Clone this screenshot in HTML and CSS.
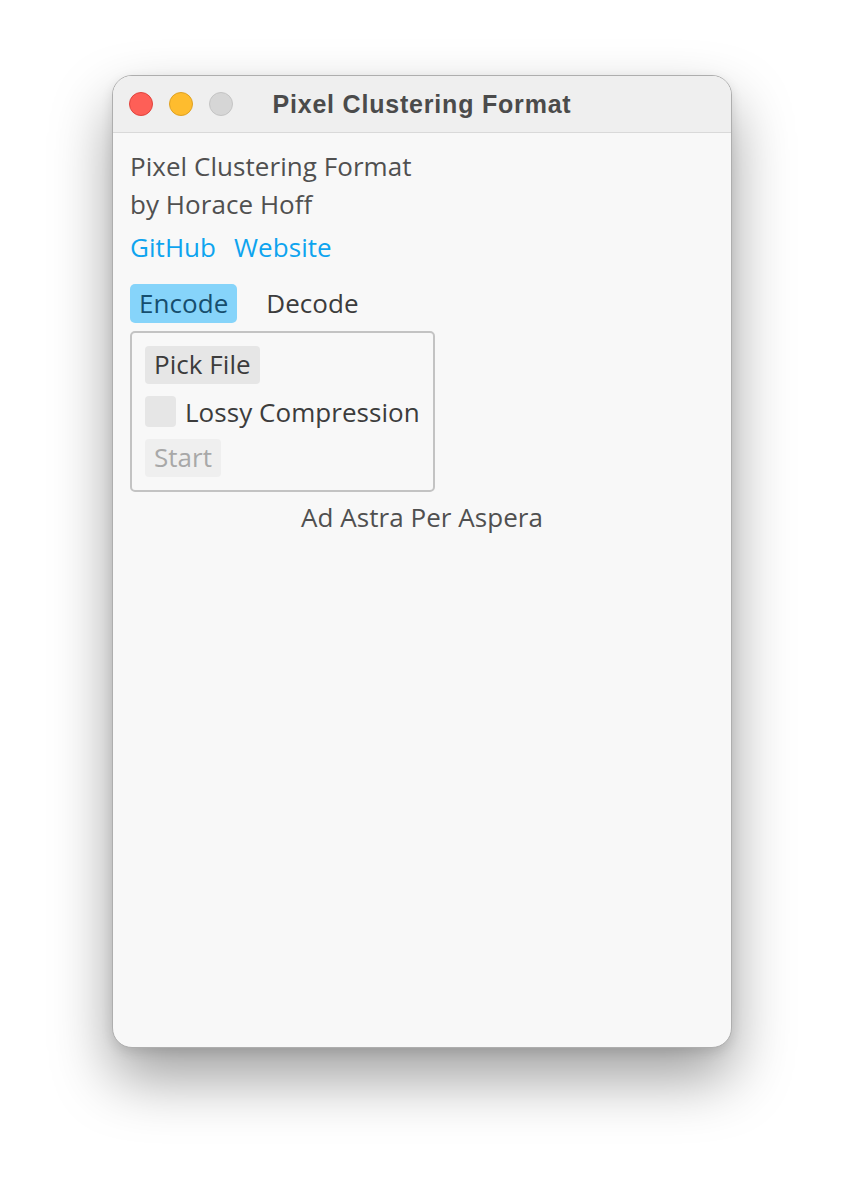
FILE: index.html
```html
<!DOCTYPE html>
<html>
<head>
<meta charset="utf-8">
<link rel="stylesheet" href="styles.css">
</head>
<body>
<div class="window">
  <div class="titlebar">
    <div class="lights">
      <span class="light red"></span>
      <span class="light yellow"></span>
      <span class="light gray"></span>
    </div>
    <div class="title">Pixel Clustering Format</div>
  </div>
  <div class="content">
    <div class="line">Pixel Clustering Format</div>
    <div class="line">by Horace Hoff</div>
    <div class="links"><span class="link">GitHub</span><span class="link">Website</span></div>
    <div class="tabs"><span class="tab active">Encode</span><span class="tab">Decode</span></div>
    <div class="group">
      <div class="btn">Pick File</div>
      <div class="check"><span class="box"></span><span>Lossy Compression</span></div>
      <div class="btn disabled">Start</div>
    </div>
    <div class="motto">Ad Astra Per Aspera</div>
  </div>
</div>
</body>
</html>
```
FILE: styles.css
```css
html, body { margin: 0; padding: 0; background: #ffffff; }
body { padding: 75px 0 0 112px; height: 1196px; box-sizing: border-box; overflow: hidden; }
.window {
  width: 620px; height: 973px; box-sizing: border-box;
  background: #f8f8f8; border-radius: 20px;
  border: 1px solid #aeaeae;
  box-shadow: 0 30px 60px rgba(0,0,0,0.38), 0 4px 12px rgba(0,0,0,0.1);
  overflow: hidden; display: flex; flex-direction: column;
}
.titlebar {
  height: 57px; flex: none; box-sizing: border-box;
  background: #efefef; border-bottom: 1px solid #d9d9d9;
  display: flex; align-items: center; padding-left: 16px;
  position: relative;
}
.lights { display: flex; gap: 16px; }
.light { width: 24px; height: 24px; border-radius: 50%; box-sizing: border-box; }
.red { background: #fe5f57; border: 1px solid #e0443e; }
.yellow { background: #febc2e; border: 1px solid #dea123; }
.gray { background: #d6d6d6; border: 1px solid #c4c4c4; }
.title {
  position: absolute; left: 0; right: 0; top: 0; bottom: 0;
  display: flex; align-items: center; justify-content: center;
  font-family: "Liberation Sans", Arial, sans-serif; font-weight: bold;
  font-size: 25px; letter-spacing: 0.8px; color: #4b4b4b; pointer-events: none;
}
.content {
  padding: 14px 17px; display: flex; flex-direction: column; align-items: flex-start;
  font-family: "Open Sans", sans-serif; font-size: 26px; letter-spacing: 0.05px; color: #505050;
}
.line { line-height: 38px; }
.links { display: flex; gap: 18px; color: #0ea4ef; line-height: 48px; }
.tabs { display: flex; gap: 20px; margin-top: 13px; }
.tab { padding: 0 9px; height: 39px; line-height: 38px; border-radius: 5px; color: #3c3c3c; }
.tab.active { background: #86d4fa; color: #164e6e; }
.group {
  margin-top: 8px; border: 2px solid #c3c3c3; border-radius: 5px;
  padding: 13px; display: flex; flex-direction: column; gap: 9px;
  align-items: flex-start;
}
.btn { background: #e6e6e6; border-radius: 4px; padding: 0 9px; height: 38px; line-height: 37px; color: #3c3c3c; }
.btn.disabled { background: #efefef; color: #a8a8a8; }
.check { display: flex; align-items: center; gap: 9px; height: 37px; color: #3c3c3c; }
.box { width: 31px; height: 31px; background: #e6e6e6; border-radius: 4px; }
.motto { align-self: center; margin-top: 6px; line-height: 38px; color: #505050; }
```
